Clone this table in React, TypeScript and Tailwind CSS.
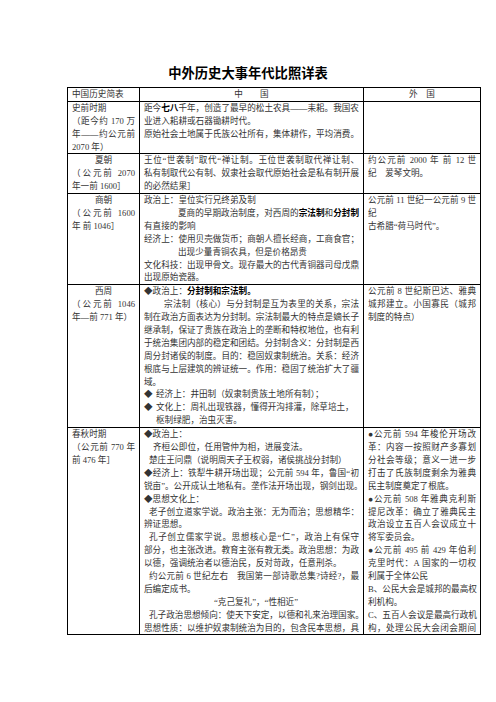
import React from 'react';
import clsx from 'clsx';

// one printed line of the table; j = spread the line to full width
const Ln = ({ j, className, children }: { j?: boolean; className?: string; children: React.ReactNode }) => (
  <div className={clsx('h-[12.9px] whitespace-nowrap', j && '[text-align-last:justify]', className)}>{children}</div>
);

const B = ({ children }: { children: React.ReactNode }) => <b className="font-bold text-black">{children}</b>;

const td = 'border border-black px-[4px] py-0 align-top';

export default function App() {
  return (
    <div className="min-h-[702px] w-[496px] bg-white text-[#333]" style={{ fontFamily: '"Liberation Serif", "Noto Sans CJK SC", serif' }}>
      <h1
        className="pt-[65px] text-center text-[13.3px] leading-[16px] font-bold text-black"
        style={{ fontFamily: '"Noto Sans CJK SC", sans-serif' }}
      >
        中外历史大事年代比照详表
      </h1>

      <table className="mt-[6px] ml-[67px] w-[413px] table-fixed border-collapse border-[1.5px] border-black text-[8.6px] leading-[12.9px]">
        <colgroup>
          <col className="w-[72px]" />
          <col className="w-[224px]" />
          <col className="w-[117px]" />
        </colgroup>
        <tbody>
          <tr>
            <td className={td}><Ln>中国历史简表</Ln></td>
            <td className={td}><Ln className="text-center">中　　国</Ln></td>
            <td className={td}><Ln className="text-center">外　国</Ln></td>
          </tr>

          <tr>
            <td className={td}>
              <Ln>史前时期</Ln>
              <Ln j>（距今约 170 万</Ln>
              <Ln j>年——约公元前</Ln>
              <Ln>2070 年）</Ln>
            </td>
            <td className={td}>
              <Ln j>距今<B>七八</B>千年，创造了最早的松土农具——耒耜。我国农</Ln>
              <Ln>业进入耜耕或石器锄耕时代。</Ln>
              <Ln j>原始社会土地属于氏族公社所有，集体耕作，平均消费。</Ln>
            </td>
            <td className={td}></td>
          </tr>

          <tr>
            <td className={td}>
              <Ln className="text-center">夏朝</Ln>
              <Ln j>（公元前 2070</Ln>
              <Ln>年一前 1600］</Ln>
            </td>
            <td className={td}>
              <Ln j>王位“世袭制”取代“禅让制。王位世袭制取代禅让制、</Ln>
              <Ln j>私有制取代公有制、奴隶社会取代原始社会是私有制开展</Ln>
              <Ln>的必然结果］</Ln>
            </td>
            <td className={td}>
              <Ln j>约公元前 2000 年 前 12 世</Ln>
              <Ln>纪　爱琴文明。</Ln>
            </td>
          </tr>

          <tr>
            <td className={td}>
              <Ln className="text-center">商朝</Ln>
              <Ln j>（公元前 1600</Ln>
              <Ln>年 前 1046］</Ln>
            </td>
            <td className={td}>
              <Ln>政治上：皇位实行兄终弟及制</Ln>
              <Ln j className="pl-[34px]">夏商的早期政治制度，对西周的<B>宗法制</B>和<B>分封制</B></Ln>
              <Ln>有直接的影响</Ln>
              <Ln j>经济上：使用贝壳做货币；商朝人擅长经商，工商食官；</Ln>
              <Ln className="pl-[34px]">出现少量青铜农具，但是价格昂贵</Ln>
              <Ln j>文化科技：出现甲骨文。现存最大的古代青铜器司母戊鼎</Ln>
              <Ln>出现原始瓷器。</Ln>
            </td>
            <td className={td}>
              <Ln j>公元前 11 世纪一公元前 9 世</Ln>
              <Ln>纪</Ln>
              <Ln>古希腊“荷马时代”。</Ln>
            </td>
          </tr>

          <tr>
            <td className={td}>
              <Ln className="text-center">西周</Ln>
              <Ln j>（公元前 1046</Ln>
              <Ln>年—前 771 年）</Ln>
            </td>
            <td className={td}>
              <Ln>◆政治上：<B>分封制和宗法制。</B></Ln>
              <Ln j className="pl-[20px]">宗法制（核心）与分封制是互为表里的关系，宗法</Ln>
              <Ln j>制在政治方面表达为分封制。宗法制最大的特点是嫡长子</Ln>
              <Ln j>继承制，保证了贵族在政治上的垄断和特权地位，也有利</Ln>
              <Ln j>于统治集团内部的稳定和团结。分封制含义：分封制是西</Ln>
              <Ln j>周分封诸侯的制度。目的：稳固奴隶制统治。关系：经济</Ln>
              <Ln j>根底与上层建筑的辨证统一。作用：稳固了统治扩大了疆</Ln>
              <Ln>域。</Ln>
              <div className="flex h-[12.9px]">
                <span className="w-[12px] shrink-0">◆</span>
                <span>经济上：井田制（奴隶制贵族土地所有制）；</span>
              </div>
              <div className="flex h-[12.9px]">
                <span className="w-[12px] shrink-0">◆</span>
                <span>文化上：周礼出现铁器，懂得开沟排灌，除草培土，</span>
              </div>
              <Ln className="pl-[12px]">枢制绿肥，治虫灭害。</Ln>
            </td>
            <td className={td}>
              <Ln j>公元前 8 世纪斯巴达、雅典</Ln>
              <Ln j>城邦建立。小国寡民（城邦</Ln>
              <Ln>制度的特点）</Ln>
            </td>
          </tr>

          <tr>
            <td className={td}>
              <Ln>春秋时期</Ln>
              <Ln j>（公元前 770 年</Ln>
              <Ln>前 476 年］</Ln>
            </td>
            <td className={td}>
              <Ln>◆政治上：</Ln>
              <Ln className="pl-[9px]">齐桓公即位，任用管仲为相，进展变法。</Ln>
              <Ln className="pl-[5px]">楚庄王问鼎（说明周天子王权弱，诸侯挑战分封制）</Ln>
              <Ln j>◆经济上：铁犁牛耕开场出现；公元前 594 年，鲁国“初</Ln>
              <Ln j>锐亩”。公开成认土地私有。垄作法开场出现，钢剑出现。</Ln>
              <Ln>◆思想文化上：</Ln>
              <Ln j className="pl-[5px]">老子创立道家学说。政治主张：无为而治；思想精华：</Ln>
              <Ln>辨证思想。</Ln>
              <Ln j className="pl-[5px]">孔子创立儒家学说。思想核心是“仁”，政治上有保守</Ln>
              <Ln j>部分，也主张改进。教育主张有教无类。政治思想：为政</Ln>
              <Ln>以德，强调统治者以德治民，反对苛政，任意刑杀。</Ln>
              <Ln j className="pl-[5px]">约公元前 6 世纪左右　我国第一部诗歌总集?诗经?，最</Ln>
              <Ln>后编定成书。</Ln>
              <Ln className="pl-[70px]">“克己复礼”，“性相近”</Ln>
              <Ln j className="pl-[5px]">孔子政治思想倾向：使天下安定，以德和礼来治理国家。</Ln>
              <Ln j>思想性质：以维护奴隶制统治为目的，包含民本思想，具</Ln>
            </td>
            <td className={td}>
              <Ln j>●公元前 594 年梭伦开场改</Ln>
              <Ln j>革：内容一按照财产多寡划</Ln>
              <Ln j>分社会等级；意义一进一步</Ln>
              <Ln j>打击了氏族制度剩余为雅典</Ln>
              <Ln>民主制度奠定了根底。</Ln>
              <Ln j>●公元前 508 年雅典克利斯</Ln>
              <Ln j>提尼改革：确立了雅典民主</Ln>
              <Ln j>政治设立五百人会议成立十</Ln>
              <Ln>将军委员会。</Ln>
              <Ln j>●公元前 495 前 429 年伯利</Ln>
              <Ln j>克里时代：A 国家的一切权</Ln>
              <Ln>利属于全体公民</Ln>
              <Ln j>B、公民大会是城邦的最高权</Ln>
              <Ln>利机构。</Ln>
              <Ln j>C、五百人会议是最高行政机</Ln>
              <Ln j>构，处理公民大会闭会期间</Ln>
            </td>
          </tr>
        </tbody>
      </table>
    </div>
  );
}
